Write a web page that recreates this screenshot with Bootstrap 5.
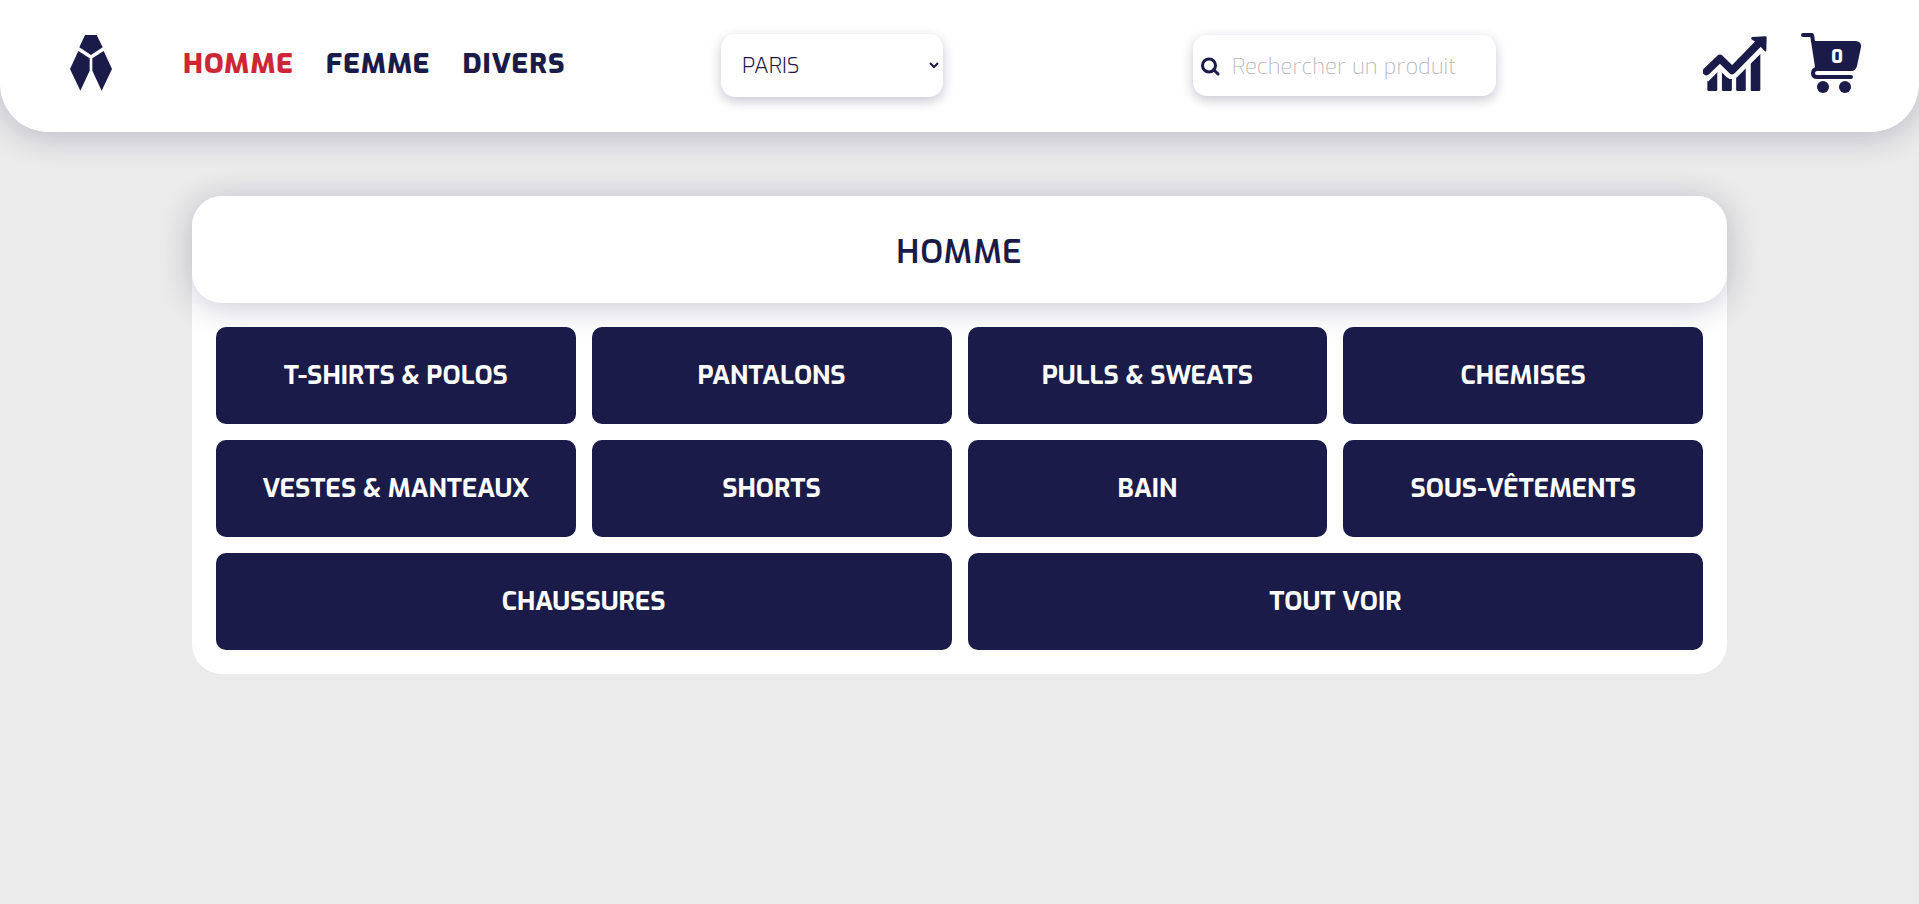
<!DOCTYPE html>
<html lang="fr">
<head>
<meta charset="utf-8">
<meta name="viewport" content="width=device-width, initial-scale=1">
<title>Homme</title>
<link href="https://cdn.jsdelivr.net/npm/bootstrap@5.3.0/dist/css/bootstrap.min.css" rel="stylesheet">
<style>
  :root { --navy: #1a1b48; --red: #ce2637; }
  body { background: #ebebeb; color: var(--navy); font-family: Exo, "Exo 2", Roboto, sans-serif; }
  .site-header {
    display: grid; grid-template-columns: 721fr 472fr 726fr; align-items: center;
    min-height: 132px; padding-bottom: 2px; background: #fff;
    border-radius: 0 0 48px 48px; box-shadow: 0 4px 32px rgba(26, 27, 72, .24);
  }
  .brand-zone { padding-left: 70px; padding-bottom: 4px; gap: 71px; }
  .menu-links { gap: 32px; padding-top: 2px; }
  .menu-links a { color: var(--navy); font-size: 28px; font-weight: 800; line-height: 32px; letter-spacing: 1px; }
  .menu-links a.active { color: var(--red); }
  .field { border: 0; border-radius: 14px; background-color: #fff; box-shadow: 0 4px 12px rgba(26, 27, 72, .25); }
  .shop-select {
    width: 222px; height: 63px; padding: 0 24px 0 21px; color: var(--navy);
    font-size: 22px; font-weight: 300;
    background-image: url("data:image/svg+xml,%3Csvg xmlns='http://www.w3.org/2000/svg' viewBox='0 0 10 8'%3E%3Cpath d='M1 2l4 4 4-4' fill='none' stroke='%231a1b48' stroke-width='2'/%3E%3C/svg%3E");
    background-size: 10px 8px; background-position: right 4px center;
  }
  .search-box { width: 303px; height: 61px; padding: 2px 0 0 8px; gap: 12px; }
  .search-box input { min-width: 0; color: var(--navy); font-size: 22px; font-weight: 300; outline: 0; }
  .search-box input::placeholder { color: #b4b4b4; font-weight: 200; opacity: 1; }
  .tools { gap: 34px; padding-right: 58px; }
  .tools a { margin-bottom: 4px; }
  .cart-count { top: 24px; left: 36px; font-size: 18px; font-weight: 800; line-height: 20px; }
  .catalog { width: 80%; margin-top: 64px; background: #fff; border-radius: 30px; }
  .catalog-title {
    padding: 37px 24px 31px; border-radius: 30px; background: #fff;
    font-size: 33px; font-weight: 600; line-height: 39px; letter-spacing: 1px;
    box-shadow: 0 4px 32px rgba(26, 27, 72, .24);
  }
  .tiles { padding: 24px; }
  .tile {
    display: flex; align-items: center; justify-content: center; width: 100%; min-height: 97px;
    border-radius: 10px; background: var(--navy); color: #fff;
    font-size: 26px; font-weight: 700; line-height: 32px; text-decoration: none;
  }
  svg { fill: var(--navy); stroke: none; display: block; flex: none; }
</style>
</head>
<body>
<header class="site-header">
  <div class="brand-zone d-flex align-items-center">
    <a href="#" aria-label="Accueil">
      <svg width="42" height="56" viewBox="60 45 126 168">
        <path d="M105 45h35l18 37-35 23-35-23zM85 93l34 22v37l-28 60-31-65zM161 93l-34 22v37l28 60 31-65z"/>
      </svg>
    </a>
    <nav class="menu-links d-flex">
      <a class="active text-decoration-none" href="#">HOMME</a>
      <a class="text-decoration-none" href="#">FEMME</a>
      <a class="text-decoration-none" href="#">DIVERS</a>
    </nav>
  </div>
  <div>
    <select class="form-select field shop-select" aria-label="Magasin"><option>PARIS</option></select>
  </div>
  <div class="tools d-flex align-items-center">
    <label class="field search-box d-flex align-items-center me-auto">
      <svg width="19" height="19" viewBox="0 0 19 19"><path d="M12.500 12.500L17 17M8 2a6.500 6.500 0 1 0 0 13 6.500 6.500 0 0 0 0-13z" fill="none" stroke="#1a1b48" stroke-width="3" stroke-linecap="round"/></svg>
      <input class="border-0 p-0 bg-transparent flex-grow-1" type="search" placeholder="Rechercher un produit" aria-label="Rechercher un produit">
    </label>
    <a href="#" aria-label="Statistiques">
      <svg width="64" height="55" viewBox="39 46 193 166">
        <path d="M49 153l41-39 37 36 84-86" fill="none" stroke="#1a1b48" stroke-width="23" stroke-linecap="round" stroke-linejoin="round"/>
        <path d="M187 49l40-2q4 0 4 4l-1 38q-1 6-5 2l-10-10-17-17-13-8q-3-5 2-7z"/>
        <path d="M52 180l30-26v54q0 4-4 4H56q-4 0-4-4zM96 154l17 17q6 5 13 5v32q0 4-4 4h-22q-4 0-4-4zM139 171l29-29v66q0 4-4 4h-21q-4 0-4-4zM183 128l29-29v109q0 4-4 4h-21q-4 0-4-4z"/>
        <path d="M52 181l37-37 22 22q15 13 30 0l72-72" fill="none" stroke="#fff" stroke-width="7"/>
      </svg>
    </a>
    <a class="position-relative" href="#" aria-label="Panier">
      <svg width="60" height="60" viewBox="63 39 180 180">
        <path d="M69 45h27l16 101q-13 2-13 13 0 12 12 12h102" fill="none" stroke="#1a1b48" stroke-width="12" stroke-linecap="round" stroke-linejoin="round"/>
        <path d="M98 63h129q18 2 16 18l-12 57q-4 15-17 15H108z"/>
        <circle cx="129" cy="201" r="18"/><circle cx="195" cy="201" r="18"/>
      </svg>
      <span class="cart-count position-absolute translate-middle text-white">0</span>
    </a>
  </div>
</header>
<main class="catalog mx-auto">
  <h1 class="catalog-title text-center mb-0">HOMME</h1>
  <div class="tiles">
    <div class="row g-3">
      <div class="col-3"><a class="tile" href="#">T-SHIRTS &amp; POLOS</a></div>
      <div class="col-3"><a class="tile" href="#">PANTALONS</a></div>
      <div class="col-3"><a class="tile" href="#">PULLS &amp; SWEATS</a></div>
      <div class="col-3"><a class="tile" href="#">CHEMISES</a></div>
      <div class="col-3"><a class="tile" href="#">VESTES &amp; MANTEAUX</a></div>
      <div class="col-3"><a class="tile" href="#">SHORTS</a></div>
      <div class="col-3"><a class="tile" href="#">BAIN</a></div>
      <div class="col-3"><a class="tile" href="#">SOUS-VÊTEMENTS</a></div>
      <div class="col-6"><a class="tile" href="#">CHAUSSURES</a></div>
      <div class="col-6"><a class="tile" href="#">TOUT VOIR</a></div>
    </div>
  </div>
</main>
<script src="https://cdn.jsdelivr.net/npm/bootstrap@5.3.0/dist/js/bootstrap.bundle.min.js"></script>
</body>
</html>
